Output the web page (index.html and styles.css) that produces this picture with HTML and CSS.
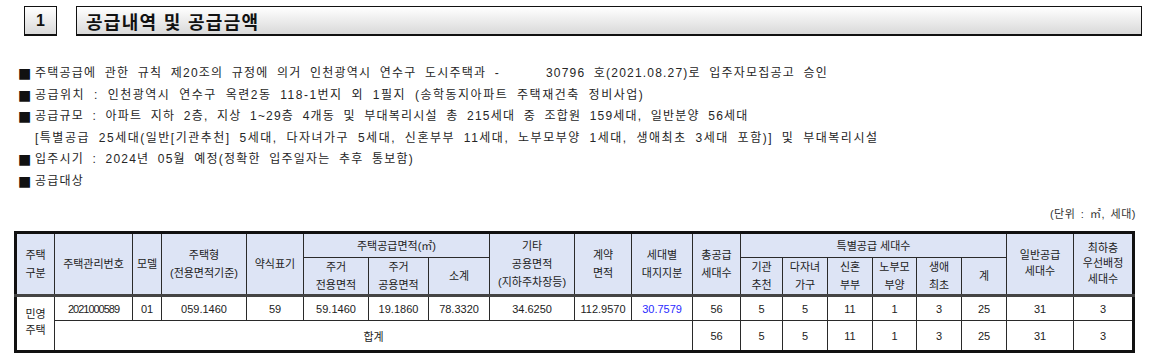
FILE: index.html
```html
<!DOCTYPE html>
<html lang="ko">
<head>
<meta charset="utf-8">
<title>공급내역 및 공급금액</title>
<link rel="stylesheet" href="styles.css">
</head>
<body>
<div class="page">
  <div class="heading">
    <div class="num">1</div>
    <div class="title">공급내역 및 공급금액</div>
  </div>
  <ul class="bullets">
    <li>주택공급에 관한 규칙 제20조의 규정에 의거 인천광역시 연수구 도시주택과 -<span class="gap"></span>30796 호(2021.08.27)로 입주자모집공고 승인</li>
    <li class="wide">공급위치 : 인천광역시 연수구 옥련2동 118-1번지 외 1필지 (송학동지아파트 주택재건축 정비사업)</li>
    <li>공급규모 : 아파트 지하 2층, 지상 1~29층 4개동 및 부대복리시설 총 215세대 중 조합원 159세대, 일반분양 56세대</li>
    <li class="cont wide">[특별공급 25세대(일반[기관추천] 5세대, 다자녀가구 5세대, 신혼부부 11세대, 노부모부양 1세대, 생애최초 3세대 포함)] 및 부대복리시설</li>
    <li>입주시기 : 2024년 05월 예정(정확한 입주일자는 추후 통보함)</li>
    <li>공급대상</li>
  </ul>
  <div class="unit">(단위 : ㎡, 세대)</div>
  <table class="supply">
    <colgroup>
      <col class="w39"><col class="w78"><col class="w29"><col class="w85"><col class="w57">
      <col class="w65"><col class="w60"><col class="w61"><col class="w85"><col class="w57">
      <col class="w61"><col class="w48"><col class="w42"><col class="w45"><col class="w45">
      <col class="w44"><col class="w45"><col class="w45"><col class="w67"><col class="w60">
    </colgroup>
    <thead>
      <tr class="h1">
        <th rowspan="2">주택<br>구분</th>
        <th rowspan="2">주택관리번호</th>
        <th rowspan="2">모델</th>
        <th rowspan="2">주택형<br>(전용면적기준)</th>
        <th rowspan="2">약식표기</th>
        <th colspan="3">주택공급면적(㎡)</th>
        <th rowspan="2">기타<br>공용면적<br>(지하주차장등)</th>
        <th rowspan="2">계약<br>면적</th>
        <th rowspan="2">세대별<br>대지지분</th>
        <th rowspan="2">총공급<br>세대수</th>
        <th colspan="6">특별공급 세대수</th>
        <th rowspan="2" class="up">일반공급<br>세대수</th>
        <th rowspan="2" class="tight">최하층<br>우선배정<br>세대수</th>
      </tr>
      <tr class="h2">
        <th>주거<br>전용면적</th>
        <th>주거<br>공용면적</th>
        <th>소계</th>
        <th>기관<br>추천</th>
        <th>다자녀<br>가구</th>
        <th>신혼<br>부부</th>
        <th>노부모<br>부양</th>
        <th>생애<br>최초</th>
        <th>계</th>
      </tr>
    </thead>
    <tbody>
      <tr class="d1">
        <td rowspan="2" class="kind">민영<br>주택</td>
        <td class="code">2021000589</td>
        <td>01</td>
        <td>059.1460</td>
        <td>59</td>
        <td>59.1460</td>
        <td>19.1860</td>
        <td>78.3320</td>
        <td>34.6250</td>
        <td>112.9570</td>
        <td class="blue">30.7579</td>
        <td>56</td>
        <td>5</td>
        <td>5</td>
        <td>11</td>
        <td>1</td>
        <td>3</td>
        <td>25</td>
        <td>31</td>
        <td>3</td>
      </tr>
      <tr class="d2">
        <td colspan="10">합계</td>
        <td>56</td>
        <td>5</td>
        <td>5</td>
        <td>11</td>
        <td>1</td>
        <td>3</td>
        <td>25</td>
        <td>31</td>
        <td>3</td>
      </tr>
    </tbody>
  </table>
</div>
</body>
</html>
```

FILE: styles.css
```css
html, body {
  margin: 0;
  padding: 0;
  background: #fff;
}

body {
  font-family: "Liberation Sans", "Noto Sans CJK KR", sans-serif;
  color: #222;
}

.page {
  width: 1154px;
  height: 360px;
  overflow: hidden;
}

.heading {
  display: flex;
  gap: 19px;
  margin: 6px 12px 0 24px;
  height: 30px;
}

.num,
.title {
  box-sizing: border-box;
  border: 1px solid #111;
  border-bottom-width: 2px;
  background: linear-gradient(#ffffff, #d9d9d9);
  font-weight: bold;
  color: #111;
  display: flex;
  align-items: center;
}

.num {
  width: 33px;
  justify-content: center;
  font-size: 16px;
}

.title {
  flex: 1;
  padding-left: 9px;
  font-size: 18px;
  letter-spacing: 1.3px;
  font-family: "Noto Sans CJK KR", sans-serif;
}

.bullets {
  list-style: none;
  margin: 27px 0 0 18px;
  padding: 0;
  font-size: 12px;
  line-height: 21.5px;
  letter-spacing: 1.2px;
  word-spacing: 4px;
  color: #262626;
}

.bullets li {
  display: flex;
  white-space: pre;
}

.bullets li.wide {
  letter-spacing: 1.5px;
}

.bullets li::before {
  content: "■";
  width: 17px;
  flex: none;
  font-family: "DejaVu Sans", sans-serif;
  font-size: 14px;
  letter-spacing: 0;
  color: #111;
}

.bullets li.cont::before {
  content: "";
}

.gap {
  display: inline-block;
  width: 46px;
}

.unit {
  text-align: right;
  margin: 15px 18px 0 0;
  font-size: 11px;
  line-height: 14px;
  letter-spacing: 0.5px;
  word-spacing: 2px;
  color: #333;
}

.supply {
  margin: 10px 0 0 14px;
  border-collapse: collapse;
  table-layout: fixed;
  width: 1121px;
  border: 3px solid #111;
  font-size: 11px;
  color: #222;
}

.supply th,
.supply td {
  padding: 0;
  text-align: center;
  vertical-align: middle;
  border: 1px solid #2a2a2a;
  overflow: hidden;
  white-space: nowrap;
}

.supply th {
  background: #dde4f5;
  font-weight: normal;
  line-height: 18px;
}

.supply th.tight { line-height: 15.5px; }
.supply th.up { line-height: 16px; padding-bottom: 3px; }

.supply tr.h1 { height: 25px; }
.supply tr.h2 { height: 34px; }
.supply tr.h2 th { line-height: 18px; }

.supply thead tr:last-child th,
.supply thead th[rowspan] {
  border-bottom: 3px solid #444;
}

.supply tr.d1 { height: 25px; }
.supply tr.d2 { height: 31px; }

.supply td.kind { line-height: 16px; padding-bottom: 4px; }
.supply td.blue { color: #2b2bff; }
.supply td.code { letter-spacing: -1px; }

.w39 { width: 39px; }
.w78 { width: 78px; }
.w29 { width: 29px; }
.w85 { width: 85px; }
.w57 { width: 57px; }
.w65 { width: 65px; }
.w60 { width: 60px; }
.w61 { width: 61px; }
.w48 { width: 48px; }
.w42 { width: 42px; }
.w45 { width: 45px; }
.w44 { width: 44px; }
.w67 { width: 67px; }
```
